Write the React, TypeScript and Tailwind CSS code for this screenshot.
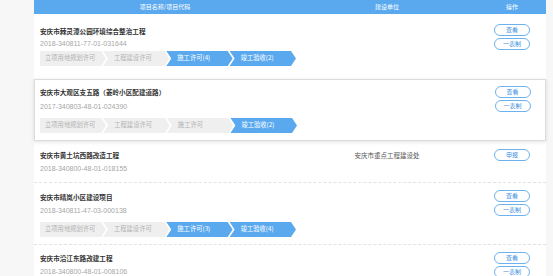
const steps = ["立项用地规划许可", "工程建设许可", "施工许可", "竣工验收"];

type Step = { label: string; on: boolean };

function Steps({ items }: { items: Step[] }) {
  return (
    <div className="flex h-[15px] mt-[5px]">
      {items.map((s, i) => (
        <div
          key={i}
          className={
            (i === 0
              ? "pl-[5px] [clip-path:polygon(0_0,calc(100%_-_5px)_0,100%_50%,calc(100%_-_5px)_100%,0_100%)] "
              : "-ml-[3px] pl-[11px] [clip-path:polygon(0_0,calc(100%_-_5px)_0,100%_50%,calc(100%_-_5px)_100%,0_100%,5px_50%)] ") +
            (s.on ? "bg-[#5aa9ef] text-white " : "bg-[#efefef] text-[#b3b3b3] ") +
            "w-[70px] flex items-center text-[6.3px] leading-none whitespace-nowrap"
          }
        >
          {s.label}
        </div>
      ))}
    </div>
  );
}

function Btn({ label }: { label: string }) {
  return (
    <div className="w-[36px] h-[12px] rounded-full border border-[#6cb2f0] text-[#3d8fe0] text-[6px] leading-none flex items-center justify-center">
      {label}
    </div>
  );
}

function Title({ text }: { text: string }) {
  return <div className="h-[12px] leading-[12px] text-[6.6px] font-bold text-[#333] whitespace-nowrap">{text}</div>;
}

function Code({ text, className }: { text: string; className: string }) {
  return (
    <div className={"h-[12px] leading-[12px] text-[7px] text-[#a6a6a6] font-['Liberation_Sans',sans-serif] " + className}>
      {text}
    </div>
  );
}

function mk(labels: string[], on: number): Step[] {
  return labels.map((l, i) => ({ label: l, on: i >= on }));
}

export default function App() {
  return (
    <div className="flex w-[553px] h-[276px] overflow-hidden bg-[#f7f7f7] font-['Noto_Sans_CJK_SC',sans-serif]">
      <div className="w-[34px] shrink-0" />
      <div className="w-[512px] shrink-0 bg-white">
        {/* header */}
        <div className="h-[14px] bg-[#5aa9ef] grid grid-cols-[262px_182px_68px] text-white text-[6px] leading-[14px] text-center">
          <div>项目名称/项目代码</div>
          <div>建设单位</div>
          <div>操作</div>
        </div>

        {/* row 1 */}
        <div className="grid grid-cols-[262px_182px_68px] pt-[11px] pb-[13px]">
          <div className="pl-[6px]">
            <Title text="安庆市棘灵潭公园环境综合整治工程" />
            <Code text="2018-340811-77-01-031644" className="mt-[1px]" />
            <div className="-mt-[4px]">
              <Steps items={mk(["立项用地规划许可", "工程建设许可", "施工许可(4)", "竣工验收(2)"], 2)} />
            </div>
          </div>
          <div />
          <div className="flex flex-col items-center gap-[2px] -mt-[1px]">
            <Btn label="查看" />
            <Btn label="一表制" />
          </div>
        </div>

        {/* row 2 card */}
        <div className="grid grid-cols-[262px_182px_68px] border border-[#dcdcdc] shadow-[0_1px_4px_rgba(0,0,0,0.12)] pt-[6px] pb-[7px]">
          <div className="pl-[5px]">
            <Title text="安庆市大观区支五路（菱岭小区配建道路）" />
            <Code text="2017-340803-48-01-024390" className="mt-[3px]" />
            <Steps items={mk(steps, 3).map((s, i) => (i === 3 ? { ...s, label: "竣工验收(2)" } : s))} />
          </div>
          <div />
          <div className="flex flex-col items-center gap-[2px] pr-[1px]">
            <Btn label="查看" />
            <Btn label="一表制" />
          </div>
        </div>

        {/* row 3 */}
        <div className="grid grid-cols-[262px_182px_68px] pt-[8px] pb-[7px] border-b border-dashed border-[#e3e3e3]">
          <div className="pl-[6px]">
            <Title text="安庆市黄土坑西路改造工程" />
            <Code text="2018-340800-48-01-018155" className="mt-[2px]" />
          </div>
          <div className="text-center text-[6.5px] leading-[12px] text-[#555]">安庆市重点工程建设处</div>
          <div className="flex flex-col items-center">
            <Btn label="申报" />
          </div>
        </div>

        {/* row 4 */}
        <div className="grid grid-cols-[262px_182px_68px] pt-[8px] pb-[7px] border-b border-dashed border-[#e3e3e3]">
          <div className="pl-[6px]">
            <Title text="安庆市晴岚小区建设项目" />
            <Code text="2018-340811-47-03-000138" className="mt-[2px]" />
            <Steps items={mk(["立项用地规划许可", "工程建设许可", "施工许可(3)", "竣工验收(4)"], 2)} />
          </div>
          <div />
          <div className="flex flex-col items-center gap-[2px] -mt-[1px]">
            <Btn label="查看" />
            <Btn label="一表制" />
          </div>
        </div>

        {/* row 5 */}
        <div className="grid grid-cols-[262px_182px_68px] pt-[7px]">
          <div className="pl-[6px]">
            <Title text="安庆市沿江东路改建工程" />
            <Code text="2018-340800-48-01-008106" className="mt-[2px]" />
          </div>
          <div />
          <div className="flex flex-col items-center gap-[2px]">
            <Btn label="查看" />
            <Btn label="一表制" />
          </div>
        </div>
      </div>
      <div className="flex-1" />
    </div>
  );
}
